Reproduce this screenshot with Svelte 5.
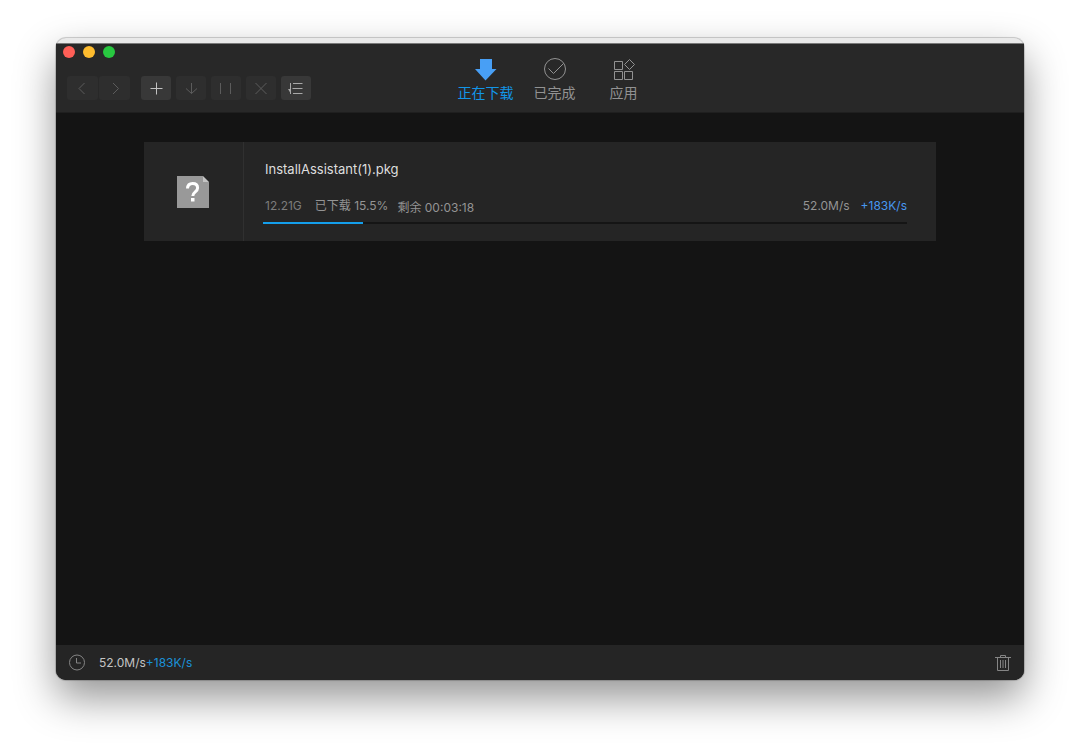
<script lang="ts">
  type Tab = "downloading" | "finished" | "apps";

  let activeTab: Tab = $state("downloading");

  const tabs: { id: Tab; label: string }[] = [
    { id: "downloading", label: "正在下载" },
    { id: "finished", label: "已完成" },
    { id: "apps", label: "应用" },
  ];

  const downloads = [
    {
      name: "InstallAssistant(1).pkg",
      size: "12.21G",
      percent: 15.5,
      remaining: "00:03:18",
      speed: "52.0M/s",
      boost: "+183K/s",
    },
  ];

  const totalSpeed = "52.0M/s";
  const totalBoost = "+183K/s";
</script>

<div class="desktop">
  <div class="window">
    <header class="header">
      <div class="header-left">
        <div class="lights">
          <button class="light close" aria-label="关闭"></button>
          <button class="light minimize" aria-label="最小化"></button>
          <button class="light zoom" aria-label="缩放"></button>
        </div>
        <div class="toolbar">
          <div class="history">
            <button class="tool" disabled aria-label="后退">
              <svg width="16" height="16" viewBox="0 0 16 16"><path d="M9.5 3 4 8.500 9.500 14" /></svg>
            </button>
            <button class="tool" disabled aria-label="前进">
              <svg width="16" height="16" viewBox="0 0 16 16"><path d="M6 3l5.500 5.500L6 14" /></svg>
            </button>
          </div>
          <div class="actions">
            <button class="tool" aria-label="新建">
              <svg width="16" height="16" viewBox="0 0 16 16"><path d="M2.500 8.500h12M8.500 2.500v12" /></svg>
            </button>
            <button class="tool" disabled aria-label="开始">
              <svg width="16" height="16" viewBox="0 0 16 16"><path d="M8.500 3v10.500M3 8.500l5.500 5 5.500-5" /></svg>
            </button>
            <button class="tool" disabled aria-label="暂停">
              <svg width="16" height="16" viewBox="0 0 16 16"><path d="M2.500 3v11M12.500 3v11" /></svg>
            </button>
            <button class="tool" disabled aria-label="删除">
              <svg width="16" height="16" viewBox="0 0 16 16"><path d="m2.500 3 11 11M13.500 3l-11 11" /></svg>
            </button>
            <button class="tool sort" aria-label="排序">
              <svg width="16" height="16" viewBox="0 0 16 16">
                <path d="M2.500 3v11M5 3.500h9.500M4.500 8.500h10M5 13.500h9.500" />
                <path class="solid" d="M0 9h3v5z" />
              </svg>
            </button>
          </div>
        </div>
      </div>

      <nav class="tabs">
        {#each tabs as tab (tab.id)}
          <button
            class="tab"
            class:active={activeTab === tab.id}
            onclick={() => (activeTab = tab.id)}
          >
            <svg width="24" height="24" viewBox="0 0 24 24">
              {#if tab.id === "downloading"}
                <path class="arrow" d="M6 2h12v10h4.500L11.500 23.500 1 12h5z" />
              {:else if tab.id === "finished"}
                <circle cx="12" cy="12" r="10.500" />
                <path d="m5.500 11.500 5 5L20.500 6.500" />
              {:else}
                <path d="M2.500 4.500h8v8h-8zM2.500 14.500h8v8h-8zM12.500 14.500h8v8h-8zM17.500 2.500l5 5-5 5-5-5z" />
              {/if}
            </svg>
            <span>{tab.label}</span>
          </button>
        {/each}
      </nav>
    </header>

    <main class="content">
      {#each downloads as item (item.name)}
        <article class="card">
          <div class="thumb">
            <svg width="32" height="32" viewBox="0 0 32 32">
              <path fill="#999" d="M0 0h26v6h6v26H0z" />
              <path fill="#c4c4c4" d="m26 0 6 6h-6z" />
              <path
                fill="none"
                stroke="#fff"
                stroke-width="3"
                d="M10.500 12.500c.2-3.300 2-5 5.100-5 3 0 5 1.600 5 4.400 0 4-4.800 3.800-4.800 8.100"
              />
              <path fill="#fff" d="M14 22h3.500v3.500H14z" />
            </svg>
          </div>
          <div class="details">
            <h2 class="name">{item.name}</h2>
            <div class="stats">
              <span class="size">{item.size}</span>
              <span class="done">已下载 {item.percent}%</span>
              <span class="remaining">剩余 {item.remaining}</span>
              <span class="speed">{item.speed}</span>
              <span class="boost">{item.boost}</span>
            </div>
            <div
              class="bar"
              role="progressbar"
              aria-label={item.name}
              aria-valuenow={item.percent}
              aria-valuemin="0"
              aria-valuemax="100"
            >
              <div class="bar-fill" style="width: {item.percent}%"></div>
            </div>
          </div>
        </article>
      {/each}
    </main>

    <footer class="footer">
      <button class="icon-button" aria-label="计划任务">
        <svg width="18" height="18" viewBox="0 0 18 18">
          <circle cx="9" cy="8.500" r="7.500" />
          <path d="M8.500 4v5H13" />
        </svg>
      </button>
      <span class="total">{totalSpeed}</span>
      <span class="total-boost">{totalBoost}</span>
      <button class="icon-button trash" aria-label="清空">
        <svg width="18" height="18" viewBox="0 0 18 18">
          <path d="M1 3.500h16M6.500 3V1.500h5V3M3.500 4v12.500h11V4M6.500 6v8M9 6v8M11.500 6v8" />
        </svg>
      </button>
    </footer>
  </div>
</div>

<style>
  :global(body) {
    margin: 0;
    background: #fff;
  }

  .desktop {
    box-sizing: border-box;
    min-height: 100vh;
    padding: 38px 56px 73px;
    display: flex;
    flex-direction: column;
    overflow: hidden;
    font-family: Inter, "Noto Sans CJK SC", sans-serif;
    font-size: 12px;
    color: #949494;
  }

  .window {
    flex: 1;
    display: flex;
    flex-direction: column;
    border-top: 5px solid #e9e9e9;
    border-radius: 10px;
    background: #141414;
    box-shadow:
      0 0 0 1px rgba(0, 0, 0, 0.12),
      0 0 2px rgba(0, 0, 0, 0.2),
      0 18px 40px rgba(0, 0, 0, 0.42);
  }

  button {
    padding: 0;
    border: 0;
    background: none;
    color: inherit;
    font: inherit;
  }

  svg {
    display: block;
    fill: none;
    stroke: currentColor;
    stroke-width: 1;
  }

  .header {
    box-sizing: border-box;
    min-height: 70px;
    display: grid;
    grid-template-columns: 1fr auto 1fr;
    background: #282828;
    border-top: 1px solid #7a7a7a;
    border-bottom: 1px solid #1f1f1f;
  }

  .header-left {
    padding: 2px 0 0 7px;
  }

  .lights {
    display: flex;
    gap: 8px;
  }

  .light {
    width: 12px;
    height: 12px;
    border-radius: 50%;
  }

  .close {
    background: #ff5f57;
  }

  .minimize {
    background: #febc2e;
  }

  .zoom {
    background: #28c840;
  }

  .toolbar {
    display: flex;
    gap: 11px;
    margin: 18px 0 0 4px;
  }

  .history {
    display: flex;
    gap: 1px;
  }

  .history .tool {
    width: 31px;
  }

  .actions {
    display: flex;
    gap: 5px;
  }

  .tool {
    width: 30px;
    height: 24px;
    display: flex;
    align-items: center;
    justify-content: center;
    border-radius: 3px;
    background: #383838;
    color: #c2c2c2;
  }

  .tool:disabled {
    background: #2e2e2e;
    color: #5c5c5c;
  }

  .sort {
    color: #a8a8a8;
  }

  .solid {
    fill: currentColor;
    stroke: none;
  }

  .tabs {
    display: flex;
    padding: 13px 0 0 29px;
  }

  .tab {
    width: 69px;
    display: flex;
    flex-direction: column;
    align-items: center;
    gap: 2px;
    font-size: 14px;
    line-height: 20px;
    color: #929292;
  }

  .tab.active {
    color: #1296e8;
  }

  .arrow {
    fill: #489ff5;
    stroke: none;
  }

  .content {
    flex: 1;
    padding: 29px 88px;
  }

  .card {
    display: flex;
    background: #252525;
  }

  .thumb {
    box-sizing: border-box;
    width: 100px;
    padding-right: 2px;
    display: flex;
    align-items: center;
    justify-content: center;
    border-right: 1px solid #303030;
  }

  .thumb svg {
    stroke: none;
  }

  .details {
    flex: 1;
    padding: 17px 29px 17px 19px;
  }

  .name {
    margin: 0 2px;
    font-size: 13px;
    font-weight: 400;
    line-height: 20px;
    color: #dedede;
  }

  .stats {
    display: flex;
    margin: 17px 0 6px 2px;
    line-height: 20px;
  }

  .size {
    color: #7c7c7c;
  }

  .done {
    margin-left: 13px;
  }

  .remaining {
    margin: 2px 0 -2px 9px;
  }

  .speed {
    margin-left: auto;
  }

  .boost {
    margin-left: 11px;
    color: #4797f0;
  }

  .bar {
    height: 2px;
    background: #151515;
  }

  .bar-fill {
    height: 2px;
    background: #149fec;
  }

  .footer {
    min-height: 35px;
    display: flex;
    align-items: center;
    padding: 0 12px;
    border-radius: 0 0 10px 10px;
    background: #252525;
    line-height: 20px;
  }

  .icon-button {
    color: #858585;
  }

  .total {
    margin-left: 13px;
    color: #c4c4c4;
  }

  .total-boost {
    color: #1b91d8;
  }

  .trash {
    margin-left: auto;
  }
</style>
